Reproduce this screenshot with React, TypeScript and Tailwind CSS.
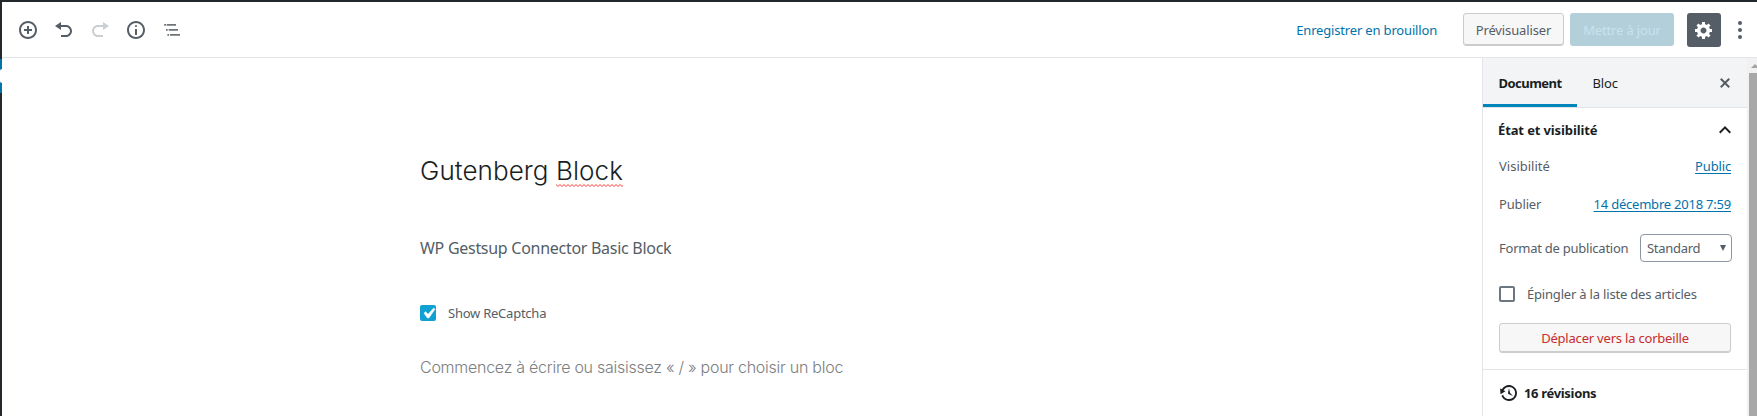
import type { ReactNode } from "react";

const ICONS = {
  insert:
    "M10 1c-5 0-9 4-9 9s4 9 9 9 9-4 9-9-4-9-9-9zm0 16c-3.9 0-7-3.1-7-7s3.1-7 7-7 7 3.1 7 7-3.1 7-7 7zm1-11H9v3H6v2h3v3h2v-3h3V9h-3V6z",
  undo: "M12 5H7V2L1 6l6 4V7h5c2.2 0 4 1.8 4 4s-1.8 4-4 4H7v2h5c3.3 0 6-2.7 6-6s-2.7-6-6-6z",
  redo: "M8 5h5V2l6 4-6 4V7H8c-2.2 0-4 1.8-4 4s1.8 4 4 4h5v2H8c-3.3 0-6-2.7-6-6s2.7-6 6-6z",
  info: "M9 15h2V9H9v6zm1-10c-.5 0-1 .5-1 1s.5 1 1 1 1-.5 1-1-.5-1-1-1zm0-4c-5 0-9 4-9 9s4 9 9 9 9-4 9-9-4-9-9-9zm0 16c-3.9 0-7-3.1-7-7s3.1-7 7-7 7 3.1 7 7-3.1 7-7 7z",
  outline: "M2.2 4H4v1.700H2.200zM4.700 4H14v1.700H4.700zM4 9h1.700v1.700H4zM6.700 9H16v1.700H6.700zM5.400 14H7v1.700H5.400zM8 14h10v1.700H8z",
  gear: "M18 12h-2.18c-.17.7-.44 1.35-.81 1.93l1.54 1.54-2.1 2.1-1.54-1.54c-.58.36-1.23.63-1.91.79V19H8v-2.180c-.68-.16-1.33-.43-1.91-.79l-1.540 1.540-2.120-2.120 1.540-1.540c-.36-.58-.63-1.230-.79-1.910H1V9.030h2.170c.16-.7.44-1.350.8-1.940L2.430 5.550l2.100-2.100 1.540 1.540c.58-.37 1.240-.64 1.930-.81V2h3v2.180c.68.16 1.330.43 1.910.79l1.540-1.540 2.120 2.120-1.540 1.540c.36.59.64 1.240.8 1.940H18V12zm-8.500 1.500c1.660 0 3-1.340 3-3s-1.340-3-3-3-3 1.340-3 3 1.340 3 3 3z",
  close:
    "M14.95 6.46L11.41 10l3.54 3.54-1.41 1.41L10 11.42l-3.53 3.53-1.42-1.42L8.58 10 5.05 6.47l1.42-1.42L10 8.58l3.54-3.53z",
  check: "M14.83 4.89l1.34.94-5.81 8.38H9.02L5.78 9.67l1.34-1.25 2.57 2.4z",
  backup:
    "M13.65 2.88c3.93 2.01 5.48 6.84 3.47 10.77s-6.83 5.48-10.77 3.47c-1.87-.96-3.2-2.56-3.86-4.4l1.64-1.03c.45 1.57 1.52 2.95 3.08 3.76 3.01 1.54 6.69.35 8.23-2.66 1.55-3.01.36-6.69-2.65-8.24C9.78 3.01 6.1 4.2 4.56 7.21l1.88.97-4.95 3.08-.39-5.82 1.78.91C4.9 2.4 9.75.89 13.65 2.88zm-4.36 7.83C9.11 10.53 9 10.28 9 10c0-.07.03-.12.04-.19h-.01L10 5l.97 4.81L14 13l-4.5-2.12.02-.02c-.08-.04-.16-.09-.23-.15z",
};

function Icon({ name, className = "size-5" }: { name: keyof typeof ICONS; className?: string }) {
  return (
    <svg viewBox="0 0 20 20" className={`shrink-0 fill-current ${className}`} aria-hidden="true">
      <path d={ICONS[name]} />
    </svg>
  );
}

function ToolButton({ children, className = "" }: { children: ReactNode; className?: string }) {
  return <button className={`flex size-9 items-center justify-center ${className}`}>{children}</button>;
}

function Header() {
  return (
    <header className="flex h-14 shrink-0 items-start border-b border-[#e2e4e7] bg-white pl-2 text-[#555d66]">
      <div className="flex pt-[10px]">
        <ToolButton><Icon name="insert" /></ToolButton>
        <ToolButton><Icon name="undo" /></ToolButton>
        <ToolButton className="text-[#cccfd2]"><Icon name="redo" /></ToolButton>
        <ToolButton><Icon name="info" /></ToolButton>
        <ToolButton className="text-[#6c7478]"><Icon name="outline" /></ToolButton>
      </div>
      <div className="ml-auto flex pt-[11px] whitespace-nowrap">
        <a className="mr-[26px] leading-[35px] tracking-[-0.17px] text-[#0073aa]">Enregistrer en brouillon</a>
        <button className="mr-1.5 flex h-[33px] w-[101px] items-center justify-center rounded-[3px] border border-[#ccc] bg-[#f7f7f7] pt-px tracking-[-0.12px] shadow-[inset_0_-1px_0_#ccc]">
          Prévisualiser
        </button>
        <button className="mr-[13px] flex h-[33px] w-[104px] items-center justify-center rounded-[3px] bg-[#b2cfda] pt-px tracking-[-0.15px] text-[#c9e3ed]">
          Mettre à jour
        </button>
        <button className="flex size-[34px] items-center justify-center rounded-[3px] bg-[#555d66] text-white">
          <Icon name="gear" />
        </button>
        <button className="flex h-[34px] w-9 items-center justify-center pl-0.5">
          <svg viewBox="0 0 4 18" className="h-[18px] w-1 fill-current" aria-hidden="true">
            <circle cx="2" cy="2" r="2" />
            <circle cx="2" cy="9" r="2" />
            <circle cx="2" cy="16" r="2" />
          </svg>
        </button>
      </div>
    </header>
  );
}

function Editor() {
  return (
    <main className="min-w-0 flex-1 pt-[95px] pl-[418px] whitespace-nowrap">
      <h1 className="font-['Inter',sans-serif] text-[26px] leading-9 font-[270] tracking-[0.08px] text-[#191e23]">
        Gutenberg{" "}
        <span className="relative inline-block">
          Block
          <svg className="absolute bottom-0.5 left-0 h-[3px] w-full fill-none stroke-[#f22]" aria-hidden="true">
            <defs>
              <pattern id="squiggle" width="4" height="3" patternUnits="userSpaceOnUse">
                <path d="M-1 1.500L0 .5L2 2.500L4 .5L5 1.500" strokeWidth="0.9" />
              </pattern>
            </defs>
            <rect width="100%" height="3" fill="url(#squiggle)" stroke="none" />
          </svg>
        </span>
      </h1>
      <p className="mt-[47px] text-base leading-6 tracking-[-0.28px] text-[#555d66]">
        WP Gestsup Connector Basic Block
      </p>
      <label className="mt-[45px] flex h-4 items-center">
        <span className="mr-3 flex size-4 items-center justify-center rounded-[2px] bg-[#11a0d2] text-white">
          <Icon name="check" className="size-[21px] stroke-current stroke-[0.6]" />
        </span>
        <span className="tracking-[-0.24px]">Show ReCaptcha</span>
      </label>
      <p className="mt-[34px] font-['Inter',sans-serif] text-base leading-6 font-light tracking-[-0.26px] text-[#7c7e80]">
        Commencez à écrire ou saisissez « / » pour choisir un bloc
      </p>
    </main>
  );
}

function Sidebar() {
  return (
    <aside className="w-[265px] shrink-0 border-l border-[#e2e4e7] whitespace-nowrap">
      <div className="flex h-[50px] border-b border-[#e2e4e7] bg-[#f3f4f5] text-[#191e23]">
        <button className="flex h-[49px] w-[94px] items-center justify-center border-b-[3px] border-[#0085ba] pt-[3px] font-bold tracking-[-0.52px]">
          Document
        </button>
        <button className="flex h-[49px] items-center pl-[15.5px] tracking-[-0.1px]">Bloc</button>
        <button className="mr-3 ml-auto flex h-[49px] items-center text-[#555d66]">
          <Icon name="close" />
        </button>
      </div>
      <section className="border-b border-[#e2e4e7] pr-4 pb-4 pl-4">
        <h2 className="-ml-px flex h-11 items-center justify-between font-bold tracking-[-0.12px] text-[#191e23]">
          État et visibilité
          <svg viewBox="0 0 24 24" className="mr-[-6px] size-6 fill-current" aria-hidden="true">
            <path d="M7.41 15.41L12 10.83l4.59 4.58L18 14l-6-6-6 6z" />
          </svg>
        </h2>
        <div className="flex h-7 items-center justify-between">
          <span>Visibilité</span>
          <a className="tracking-[-0.15px] text-[#0073aa] underline underline-offset-2">Public</a>
        </div>
        <div className="flex h-12 items-center justify-between">
          <span className="tracking-[-0.15px]">Publier</span>
          <a className="tracking-[-0.22px] text-[#0073aa] underline underline-offset-2">14 décembre 2018 7:59</a>
        </div>
        <div className="flex h-10 items-center justify-between">
          <span className="tracking-[-0.24px]">Format de publication</span>
          <span className="mr-[-1px] flex h-7 w-[92px] items-center justify-between rounded-[4px] border border-[#8d96a0] pr-[5px] pl-1.5 tracking-[-0.3px]">
            Standard
            <svg viewBox="0 0 6 6" className="size-1.5 fill-current" aria-hidden="true">
              <path d="M0 0h6L3 6z" />
            </svg>
          </span>
        </div>
        <label className="flex h-[52px] items-center">
          <span className="mr-3 size-4 rounded-[2px] border-2 border-[#6c7781]" />
          <span className="tracking-[-0.19px]">Épingler à la liste des articles</span>
        </label>
        <button className="mt-[3px] flex h-[30px] w-full items-center justify-center rounded-[3px] border border-[#ccc] bg-[#f7f7f7] tracking-[-0.2px] text-[#c92c2c] shadow-[inset_0_-1px_0_#ccc]">
          Déplacer vers la corbeille
        </button>
      </section>
      <div className="flex h-[46px] items-center pl-4 font-bold tracking-[-0.32px] text-[#191e23]">
        <Icon name="backup" className="mr-[5px] size-5" />
        16 révisions
      </div>
    </aside>
  );
}

function Scrollbar() {
  return (
    <div className="flex w-[10px] shrink-0 flex-col bg-[#f1f1f1] pl-0.5">
      <svg viewBox="0 0 8 15" className="h-[15px] w-2 fill-[#a3a3a3]" aria-hidden="true">
        <path d="M2 10L6 6l4 4z" />
      </svg>
      <div className="flex-1 bg-[#a8a8a8]" />
    </div>
  );
}

export default function App() {
  return (
    <div className="flex h-[416px] w-[1757px] flex-col overflow-hidden bg-white font-['Noto_Sans',sans-serif] text-[13px] leading-[18px] text-[#555d66]">
      <div className="h-0.5 shrink-0 bg-[#23282d]" />
      <div className="flex min-h-0 flex-1">
        <div className="flex w-0.5 shrink-0 flex-col bg-[#23282d] pt-[57px]">
          <div className="h-[34px] bg-[#0073aa] pt-[10px]">
            <div className="h-[14px] rounded-l-[2px] bg-white" />
          </div>
        </div>
        <div className="flex min-w-0 flex-1 flex-col">
          <Header />
          <div className="flex min-h-0 flex-1">
            <Editor />
            <Sidebar />
            <Scrollbar />
          </div>
        </div>
      </div>
    </div>
  );
}
